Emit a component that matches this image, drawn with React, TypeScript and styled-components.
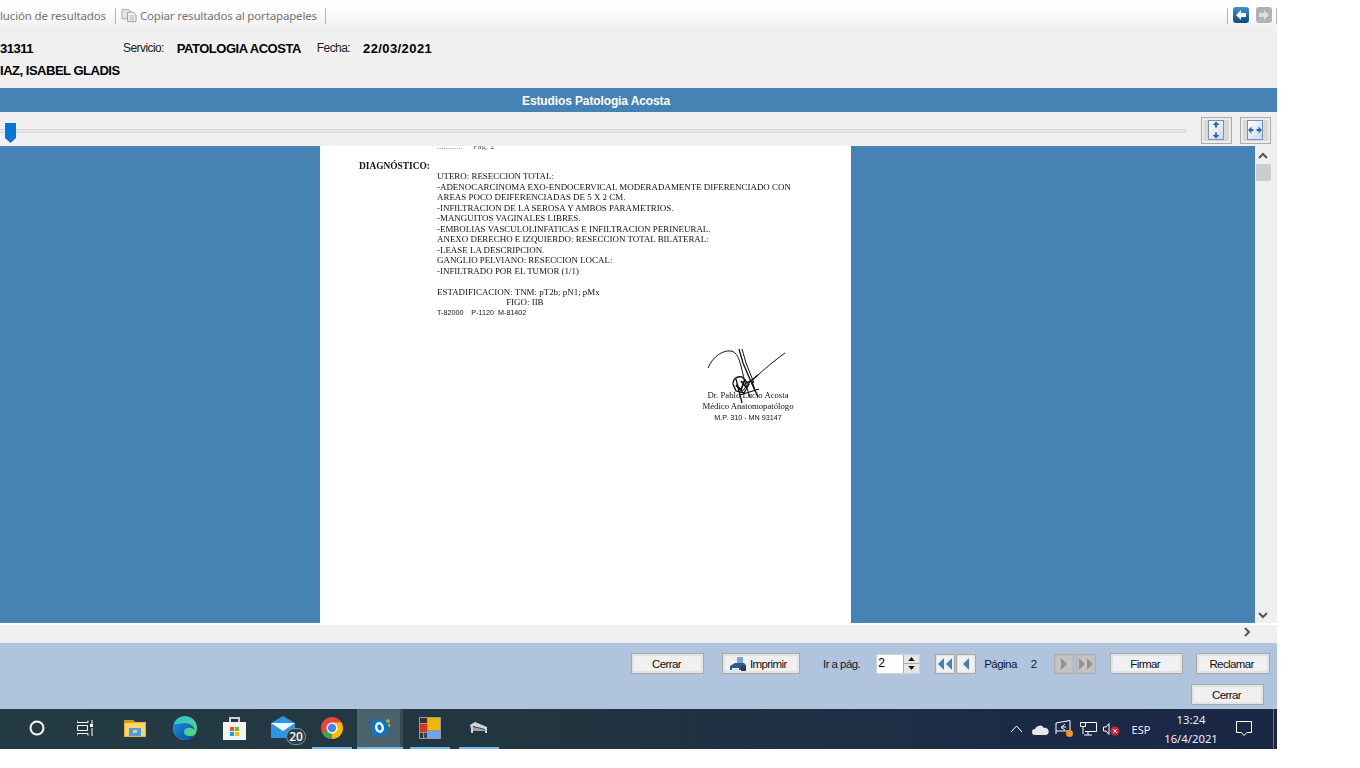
import React from "react";
import styled, { createGlobalStyle } from "styled-components";

const Global = createGlobalStyle`
  html, body { margin: 0; padding: 0; background: #fff; overflow: hidden; }
  * { box-sizing: border-box; }
`;

const Frame = styled.div`
  width: 1277px; height: 749px; display: flex; flex-direction: column; overflow: hidden;
  font-family: "Liberation Sans", Arial, sans-serif; color: #000; background: #f0f0f0;
`;
const Toolbar = styled.div`
  height: 28px; flex: none; display: flex; align-items: center; white-space: nowrap;
  background: linear-gradient(#fff 0%, #fdfdfd 40%, #f0f0f0 100%);
  font-family: "Noto Sans", sans-serif; font-size: 11.5px; color: #747474; padding-top: 3px;
`;
const ToolText = styled.span<{ $ml?: number }>`margin-left: ${p => p.$ml ?? 0}px; letter-spacing: -0.15px;`;
const ToolSep = styled.span<{ $ml: number }>`width: 1px; height: 16px; background: #b4b4b4; margin-left: ${p => p.$ml}px; flex: none;`;
const Spacer = styled.div`flex: 1;`;
const NavIcon = styled.svg<{ $ml: number }>`margin-left: ${p => p.$ml}px; flex: none; margin-top: -2px;`;

const InfoBlock = styled.div`height: 60px; flex: none; padding-top: 13px; display: flex; flex-direction: column; gap: 8px;`;
const InfoRow = styled.div`height: 14px; display: flex; align-items: center; white-space: nowrap;`;
const Label = styled.span<{ $ml: number }>`margin-left: ${p => p.$ml}px; font-size: 12px; letter-spacing: -0.58px; color: #222;`;
const Value = styled.span<{ $ml: number; $ls?: number }>`margin-left: ${p => p.$ml}px; font-size: 13px; font-weight: 700; letter-spacing: ${p => p.$ls ?? -0.48}px;`;

const TitleBar = styled.div`
  height: 24px; flex: none; background: #4682b4; color: #fff; font-size: 12px; font-weight: 700; letter-spacing: -0.12px;
  display: flex; align-items: center; justify-content: center; padding: 2px 85px 0 0;
`;

const SliderRow = styled.div`height: 34px; flex: none; display: flex; align-items: flex-start; position: relative;`;
const Track = styled.div`
  width: 1186px; height: 4px; margin-top: 17px; flex: none; background: #e7e7e7;
  border: 1px solid #d6d6d6; border-left: 0;
`;
const Thumb = styled.svg`position: absolute; left: 5px; top: 11px;`;
const FitButton = styled.button<{ $ml: number }>`
  width: 31px; height: 27px; margin: 5px 0 0 ${p => p.$ml}px; padding: 0; flex: none;
  border: 1px solid #acacac; background: #dcd9d2; box-shadow: inset 0 0 0 2px #ececec;
  display: flex; align-items: center; justify-content: center;
`;

const ViewerRow = styled.div`height: 477px; flex: none; display: flex;`;
const Viewer = styled.div`width: 1255px; flex: none; background: #4682b4; display: flex; justify-content: flex-start; padding-left: 320px; overflow: hidden;`;
const Page = styled.div`
  width: 531px; flex: none; height: 100%; background: #fff; position: relative; padding: 0 0 0 39px;
  font-family: "Liberation Serif", "Times New Roman", serif; font-size: 8.93px; line-height: 10.5px;
  color: #111; white-space: pre;
`;
const CutLine = styled.div`height: 4px; overflow: hidden; padding-left: 78px; font-size: 8.5px; line-height: 0; color: #666; filter: blur(0.3px);`;
const Diagnosis = styled.div`margin-top: 11px; height: 10px; font-weight: 700; font-size: 9.4px; line-height: 10px; filter: blur(0.25px);`;
const DocText = styled.div`margin-left: 78px; filter: blur(0.25px);`;
const SmallCodes = styled.div`margin: -1px 0 0 78px; font-family: "Liberation Sans", sans-serif; font-size: 7.2px; line-height: 11px; filter: blur(0.25px);`;
const Signature = styled.div`
  margin: 72px 0 0 324px; width: 130px; text-align: center; font-size: 8.7px; line-height: 11px; position: relative; filter: blur(0.25px);
`;
const SigCode = styled.div`font-family: "Liberation Sans", sans-serif; font-size: 7.2px;`;
const SigDraw = styled.svg`position: absolute; left: 20px; top: -42px;`;

const VScroll = styled.div`width: 22px; flex: none; display: flex; flex-direction: column; padding-right: 6px; align-items: center;`;
const ScrollThumb = styled.div`width: 15px; height: 17px; background: #cdcdcd; margin-top: 5px; flex: none; margin-left: 1px;`;
const ScrollArrow = styled.svg<{ $mt: number }>`margin-top: ${p => p.$mt}px; flex: none;`;

const HScroll = styled.div`height: 20px; flex: none; border-top: 2px solid #fff; display: flex; justify-content: flex-end; align-items: center; padding: 0 26px 4px 0; width: 100%;`;

const Footer = styled.div`height: 66px; flex: none; background: #b0c4de; padding-top: 10px; display: flex; flex-direction: column;`;
const FootRow = styled.div`height: 21px; display: flex; align-items: center; flex: none;`;
const FootRowBottom = styled(FootRow)`margin-top: 10px; padding-left: 1191px;`;
const WinButton = styled.button<{ $w: number; $ml: number }>`
  width: ${p => p.$w}px; height: 21px; margin-left: ${p => p.$ml}px; flex: none; padding: 0 2px 0 0;
  border: 1px solid #a9a9a9; background: #f0f0f0; box-shadow: inset 0 0 0 2px #e3e3e3;
  font-family: "Liberation Sans", sans-serif; font-size: 11.5px; letter-spacing: -0.6px; color: #111;
  display: flex; align-items: center; justify-content: center; gap: 3px;
`;
const IconButton = styled(WinButton)`justify-content: flex-start; padding-left: 6px;`;
const FootText = styled.span<{ $ml: number }>`margin-left: ${p => p.$ml}px; font-size: 11.5px; letter-spacing: -0.55px; color: #0f1a2c; flex: none;`;
const PageInput = styled.div`
  width: 44px; height: 20px; margin-left: 16px; flex: none; background: #fff; border: 1px solid #c8cfd8; display: flex; justify-content: space-between;
  font-size: 12px; line-height: 16px; padding-left: 1px; color: #000;
`;
const Spinner = styled.div`width: 16px; display: flex; flex-direction: column; border-left: 1px solid #aaa;`;
const SpinPart = styled.div`flex: 1; background: #e6e6e6; display: flex; align-items: center; justify-content: center; & + & { border-top: 1px solid #aaa; }`;
const PageNav = styled.button<{ $ml: number; $off?: boolean }>`
  width: 20px; height: 20px; margin-left: ${p => p.$ml}px; padding: 0; flex: none; display: flex; align-items: center; justify-content: center;
  border: 1px solid ${p => p.$off ? "#b0b0b0" : "#a9a9a9"}; background: ${p => p.$off ? "#c4c4c4" : "#f0f0f0"};
  box-shadow: inset 0 0 0 1px ${p => p.$off ? "#bcbcbc" : "#e3e3e3"};
`;

const Taskbar = styled.div`
  height: 40px; flex: none; display: flex; align-items: center; padding-left: 13px; position: relative;
  background: linear-gradient(90deg, #243b45 0%, #223640 40%, #1b2b47 80%, #1a2745 100%); color: #fff;
`;
const Slot = styled.div<{ $w: number; $on?: boolean; $active?: boolean; $ml?: number }>`
  width: ${p => p.$w}px; height: 40px; flex: none; margin-left: ${p => p.$ml ?? 0}px; display: flex; align-items: center; justify-content: center;
  position: relative; background: ${p => p.$active ? "#4a626b" : "transparent"};
  border-bottom: 2px solid ${p => p.$on ? "#76b9ed" : "transparent"};
  box-shadow: ${p => p.$active ? "inset -3px 0 0 #3a4d55" : "none"};
`;
const Badge = styled.span`
  position: absolute; left: 27px; top: 19px; width: 20px; height: 17px; border-radius: 9px; background: #2c3e46; border: 1px solid #8a949a;
  font-family: "Open Sans", sans-serif; font-size: 12px; font-weight: 600; line-height: 15px; text-align: center; color: #fff;
`;
const Tray = styled.div<{ $w: number }>`width: ${p => p.$w}px; flex: none; display: flex; align-items: center; justify-content: center;`;
const TrayText = styled(Tray)`font-family: "Noto Sans", sans-serif; font-size: 11px; color: #eef;`;
const Clock = styled(Tray)`flex-direction: column; font-family: "Noto Sans", sans-serif; font-size: 11.3px; line-height: 19px; color: #eef; margin-top: -1px;`;
const DesktopEdge = styled.div`position: absolute; left: 1273px; top: 0; width: 1px; height: 40px; background: #66717f;`;

const LeftArrow = ({ c }: { c: string }) => <path d="M3 8l5-5v3h5v4H8v3z" fill={c} />;

const DocLines = `UTERO: RESECCION TOTAL:
-ADENOCARCINOMA EXO-ENDOCERVICAL MODERADAMENTE DIFERENCIADO CON
AREAS POCO DEIFERENCIADAS DE 5 X 2 CM.
-INFILTRACION DE LA SEROSA Y AMBOS PARAMETRIOS.
-MANGUITOS VAGINALES LIBRES.
-EMBOLIAS VASCULOLINFATICAS E INFILTRACION PERINEURAL.
ANEXO DERECHO E IZQUIERDO: RESECCION TOTAL BILATERAL:
-LEASE LA DESCRIPCION.
GANGLIO PELVIANO: RESECCION LOCAL:
-INFILTRADO POR EL TUMOR (1/1)

ESTADIFICACION: TNM: pT2b; pN1; pMx
                               FIGO: IIB`;

const Tri = ({ dir, c }: { dir: "l" | "r"; c: string }) =>
  dir === "l" ? <path d="M7 1v12L1 7z" fill={c} /> : <path d="M1 1v12l6-6z" fill={c} />;

export default function App() {
  return (
    <Frame>
      <Global />
      <Toolbar>
        <ToolText>lución de resultados</ToolText>
        <ToolSep $ml={9} />
        <svg width="16" height="15" viewBox="0 0 17 15" style={{ marginLeft: 5 }}>
          <path d="M1 1h7l2 2v8H1z" fill="#e4e4e4" stroke="#a8a8a8" />
          <path d="M7 4h6l3 3v7H7z" fill="#f2f2f2" stroke="#9a9a9a" />
          <path d="M9 8h5M9 10h5M9 12h5" stroke="#b0b0b0" />
        </svg>
        <ToolText $ml={3}>Copiar resultados al portapapeles</ToolText>
        <ToolSep $ml={8} />
        <Spacer />
        <ToolSep $ml={0} />
        <NavIcon $ml={5} width="16" height="16" viewBox="0 0 16 16">
          <defs><linearGradient id="bl" x1="0" y1="0" x2="0" y2="1"><stop offset="0" stopColor="#3f8fd0" /><stop offset="1" stopColor="#0c4a7f" /></linearGradient></defs>
          <rect width="16" height="16" rx="3" fill="url(#bl)" />
          <LeftArrow c="#fff" />
        </NavIcon>
        <NavIcon $ml={7} width="16" height="16" viewBox="0 0 16 16">
          <rect width="16" height="16" rx="3" fill="#b2b2b2" />
          <g transform="matrix(-1 0 0 1 16 0)"><LeftArrow c="#dedede" /></g>
        </NavIcon>
        <ToolSep $ml={4} />
      </Toolbar>

      <InfoBlock>
        <InfoRow>
          <Value $ml={0}>31311</Value>
          <Label $ml={90}>Servicio:</Label>
          <Value $ml={13}>PATOLOGIA ACOSTA</Value>
          <Label $ml={16}>Fecha:</Label>
          <Value $ml={13} $ls={0.4}>22/03/2021</Value>
        </InfoRow>
        <InfoRow><Value $ml={0}>IAZ, ISABEL GLADIS</Value></InfoRow>
      </InfoBlock>

      <TitleBar>Estudios Patologia Acosta</TitleBar>

      <SliderRow>
        <Track />
        <Thumb width="11" height="20" viewBox="0 0 11 20"><path d="M0 0h11v15l-5.5 5L0 15z" fill="#0078d7" /></Thumb>
        <FitButton $ml={15}>
          <svg width="17" height="21" viewBox="0 0 17 21">
            <defs><linearGradient id="pg" x1="0" y1="0" x2="1" y2="1"><stop offset="0" stopColor="#fff" /><stop offset="1" stopColor="#c9d9ee" /></linearGradient></defs>
            <rect x=".5" y=".5" width="15" height="19" fill="url(#pg)" stroke="#6d93c4" />
            <path d="M8 1.500l3.500 3.500H9v2.500H7V5H4.500zM8 18.500l3.500-3.500H9v-2.500H7V15H4.500z" fill="#33669c" />
          </svg>
        </FitButton>
        <FitButton $ml={8}>
          <svg width="17" height="21" viewBox="0 0 17 21">
            <rect x=".5" y=".5" width="15" height="19" fill="url(#pg)" stroke="#6d93c4" />
            <path d="M1 10l3.500-3.500V9h2v2h-2v2.500zM15 10l-3.500-3.500V9h-2v2h2v2.500z" fill="#33669c" />
          </svg>
        </FitButton>
      </SliderRow>

      <ViewerRow>
        <Viewer>
          <Page>
            <CutLine>{"............     Pag. 2"}</CutLine>
            <Diagnosis>DIAGNÓSTICO:</Diagnosis>
            <DocText>{DocLines}</DocText>
            <SmallCodes>{"T-82000    P-1120  M-81402"}</SmallCodes>
            <Signature>
              <SigDraw width="90" height="66" viewBox="0 0 90 66" fill="none" stroke="#111" strokeWidth="1">
                <path d="M5 20C10 8 20 2 28 3c6 1 8 8 10 15 2 9 5 20 9 31" />
                <path d="M36 1l4 14 9 21 6 13" strokeWidth="1.3" />
                <path d="M39 1l4 14 8 20" />
                <path d="M82 5C68 15 56 26 46 35l-8 10" />
                <path d="M30 36c0-6 5-8 9-7l7 7-5 9-8-2zM33 31l6 24M42 36c4-2 9-5 13-9M37 47l19-6M49 33l3 10" strokeWidth="1.3" />
                <path d="M33 37l6 6M38 33l5 6M42 31l-4 11" strokeWidth="1.8" />
              </SigDraw>
              <div>Dr. Pablo Lucio Acosta</div>
              <div>Médico Anatomopatólogo</div>
              <SigCode>M.P. 310 - MN 93147</SigCode>
            </Signature>
          </Page>
        </Viewer>
        <VScroll>
          <ScrollArrow $mt={6} width="10" height="7" viewBox="0 0 10 7"><path d="M1 6l4-4 4 4" fill="none" stroke="#555" strokeWidth="2" /></ScrollArrow>
          <ScrollThumb />
          <ScrollArrow $mt={431} width="10" height="7" viewBox="0 0 10 7"><path d="M1 1l4 4 4-4" fill="none" stroke="#555" strokeWidth="2" /></ScrollArrow>
        </VScroll>
      </ViewerRow>

      <HScroll>
        <svg width="7" height="10" viewBox="0 0 7 10"><path d="M1 1l4 4-4 4" fill="none" stroke="#555" strokeWidth="2" /></svg>
      </HScroll>

      <Footer>
        <FootRow>
          <WinButton $w={73} $ml={631}>Cerrar</WinButton>
          <IconButton $w={78} $ml={18}>
            <svg width="18" height="16" viewBox="0 0 18 16">
              <path d="M1 10l5-3h9l2 2v5H1z" fill="#2d5a8c" />
              <path d="M8 1h6v6H8z" fill="#7aa5d6" />
              <path d="M3 12h7v3H3z" fill="#dfe6ee" />
              <path d="M12 10h5v5h-5z" fill="#403a34" />
            </svg>
            Imprimir
          </IconButton>
          <FootText $ml={23}>Ir a pág.</FootText>
          <PageInput>
            2
            <Spinner>
              <SpinPart><svg width="7" height="4" viewBox="0 0 8 5"><path d="M4 0l4 5H0z" fill="#111" /></svg></SpinPart>
              <SpinPart><svg width="7" height="4" viewBox="0 0 8 5"><path d="M4 5L0 0h8z" fill="#111" /></svg></SpinPart>
            </Spinner>
          </PageInput>
          <PageNav $ml={15}>
            <svg width="16" height="14" viewBox="0 0 16 14"><Tri dir="l" c="#4682b4" /><g transform="translate(8 0)"><Tri dir="l" c="#4682b4" /></g></svg>
          </PageNav>
          <PageNav $ml={1}>
            <svg width="8" height="14" viewBox="0 0 8 14"><Tri dir="l" c="#4682b4" /></svg>
          </PageNav>
          <FootText $ml={8}>Página</FootText>
          <FootText $ml={14}>2</FootText>
          <PageNav $ml={17} $off>
            <svg width="8" height="14" viewBox="0 0 8 14"><Tri dir="r" c="#929292" /></svg>
          </PageNav>
          <PageNav $ml={2} $off>
            <svg width="16" height="14" viewBox="0 0 16 14"><Tri dir="r" c="#929292" /><g transform="translate(8 0)"><Tri dir="r" c="#929292" /></g></svg>
          </PageNav>
          <WinButton $w={73} $ml={14}>Firmar</WinButton>
          <WinButton $w={74} $ml={13}>Reclamar</WinButton>
        </FootRow>
        <FootRowBottom>
          <WinButton $w={73} $ml={0}>Cerrar</WinButton>
        </FootRowBottom>
      </Footer>

      <Taskbar>
        <Slot $w={48}>
          <svg width="16" height="16" viewBox="0 0 16 16"><circle cx="8" cy="8" r="6.5" fill="none" stroke="#fff" strokeWidth="2" /></svg>
        </Slot>
        <Slot $w={48}>
          <svg width="16" height="16" viewBox="0 0 16 16" fill="none" stroke="#fff"><path d="M0 .5v2h11v-2M.5 5.5h10v5H.5zM0 15.500v-2h11v2M15 0v5M15 8v8" /><rect x="13" y="4" width="3" height="3" fill="#fff" stroke="none" /></svg>
        </Slot>
        <Slot $w={52}>
          <svg width="22" height="18" viewBox="0 0 22 18">
            <path d="M0 1h9l2 2h11v15H0z" fill="#e8b23a" />
            <path d="M0 1h9v3H0z" fill="#d69e18" />
            <path d="M1 4h20v13H1z" fill="#fcd46a" />
            <path d="M5 9h12v8H5z" fill="#4a9fe0" />
            <path d="M9 11h4v3H9z" fill="#f6d05c" />
          </svg>
        </Slot>
        <Slot $w={48}>
          <svg width="24" height="24" viewBox="0 0 24 24">
            <defs>
              <linearGradient id="e1" x1="0" y1="0" x2="1" y2="1"><stop offset="0" stopColor="#2cc0e8" /><stop offset="1" stopColor="#5fd86a" /></linearGradient>
              <linearGradient id="e2" x1="0" y1="0" x2="1" y2="1"><stop offset="0" stopColor="#1a88d8" /><stop offset="1" stopColor="#0b4f9a" /></linearGradient>
            </defs>
            <circle cx="12" cy="12" r="12" fill="url(#e1)" />
            <path d="M1 8C-2 16 4 24 13 24c4 0 7-2 9-5-5 2-11 1-11-3 0-3 3-5 7-4 2 .5 3 1.500 4 2-1-4-5-7-10-7-5 0-10 2-11 1z" fill="url(#e2)" />
          </svg>
        </Slot>
        <Slot $w={50}>
          <svg width="23" height="24" viewBox="0 0 23 24">
            <path d="M7 6V2h9v4" fill="none" stroke="#d0d0d0" strokeWidth="2" />
            <rect y="6" width="23" height="18" fill="#f3f3f3" />
            <path d="M7 11h4v4H7z" fill="#f25022" /><path d="M12 11h4v4h-4z" fill="#7fba00" /><path d="M7 16h4v4H7z" fill="#00a4ef" /><path d="M12 16h4v4h-4z" fill="#ffb900" />
          </svg>
        </Slot>
        <Slot $w={48}>
          <svg width="24" height="22" viewBox="0 0 24 22" style={{ marginRight: 0, marginTop: -2 }}>
            <path d="M0 7L12 0l12 7v15H0z" fill="#2b96e6" />
            <path d="M0 7h24L12 15z" fill="#f2f6fb" />
          </svg>
          <Badge>20</Badge>
        </Slot>
        <Slot $w={40} $on $ml={5}>
          <svg width="22" height="22" viewBox="0 0 22 22">
            <circle cx="11" cy="11" r="11" fill="#e8453c" />
            <path d="M11 11L1.500 16.500A11 11 0 0 0 11 22z" fill="#34a853" />
            <path d="M11 11v11a11 11 0 0 0 9.500-16.500H11z" fill="#fbbc05" />
            <circle cx="11" cy="11" r="5.500" fill="#fff" /><circle cx="11" cy="11" r="4.200" fill="#4285f4" />
          </svg>
        </Slot>
        <Slot $w={46} $on $active $ml={5}>
          <svg width="22" height="22" viewBox="0 0 22 22">
            <path d="M1 5l16-4 3 15-15 4z" fill="#0a78c8" />
            <path d="M17 3l3-1 1 3-3 1zM19 7l2-.500.500 3-2 .500z" fill="#e0a020" />
            <ellipse cx="10.500" cy="10.500" rx="3.200" ry="4.300" fill="none" stroke="#fff" strokeWidth="2.400" transform="rotate(-12 10.500 10.500)" />
          </svg>
        </Slot>
        <Slot $w={1} />
        <Slot $w={40} $on $ml={6}>
          <svg width="22" height="22" viewBox="0 0 22 22">
            <rect width="22" height="22" fill="#9a9a9a" />
            <rect x="1" y="1" width="7" height="5" fill="#333" /><rect x="1" y="7" width="7" height="8" fill="#d8332a" /><rect x="1" y="16" width="3" height="5" fill="#333" /><rect x="5" y="16" width="3" height="5" fill="#444" />
            <rect x="9" y="1" width="12" height="12" fill="#f2b600" /><rect x="9" y="14" width="12" height="7" fill="#6aa6ee" />
          </svg>
        </Slot>
        <Slot $w={40} $on $ml={9}>
          <svg width="20" height="14" viewBox="0 0 20 14">
            <path d="M1 4l5-3 12 5v6h-2V8L4 5v7H2V8z" fill="#d3d3d3" />
            <path d="M4 6l13 3v1H4z" fill="#9aa4a8" />
          </svg>
        </Slot>
        <Spacer />
        <Tray $w={24}><svg width="13" height="8" viewBox="0 0 13 8"><path d="M1 7l5.500-6L12 7" fill="none" stroke="#fff" /></svg></Tray>
        <Tray $w={24}><svg width="17" height="11" viewBox="0 0 17 11"><path d="M3 11a3 3 0 0 1 0-6 5 5 0 0 1 9-1 3.500 3.500 0 0 1 2 7z" fill="#e8e8e8" /></svg></Tray>
        <Tray $w={24}>
          <svg width="19" height="18" viewBox="0 0 19 18" fill="none" stroke="#fff"><path d="M1 3l14-2.500V11H1zM1 11v3" /><path d="M10 4L6 7.500 10 10M6 7h5" /><circle cx="14.500" cy="13.500" r="3.500" fill="#f7941d" stroke="none" /></svg>
        </Tray>
        <Tray $w={24}>
          <svg width="17" height="14" viewBox="0 0 17 14" fill="none" stroke="#fff"><path d="M3 .5h13.500v9H5M.5.500h5v4h-5zM3 4.500V12M8 10v3M4 13h8" /></svg>
        </Tray>
        <Tray $w={22}>
          <svg width="17" height="14" viewBox="0 0 17 14"><path d="M.5 5H3l3-3.500v11L3 9H.5z" fill="none" stroke="#fff" /><circle cx="12" cy="9" r="4.500" fill="#d8232f" /><path d="M10 7l4 4M14 7l-4 4" stroke="#fff" /></svg>
        </Tray>
        <TrayText $w={38}>ESP</TrayText>
        <Clock $w={62}><span>13:24</span><span>16/4/2021</span></Clock>
        <Tray $w={44}>
          <svg width="17" height="16" viewBox="0 0 17 16"><path d="M.5.500h15v11H11L8 14.500 5.500 11.500H.5z" fill="none" stroke="#fff" /></svg>
        </Tray>
        <Slot $w={11} />
        <DesktopEdge />
      </Taskbar>
    </Frame>
  );
}
